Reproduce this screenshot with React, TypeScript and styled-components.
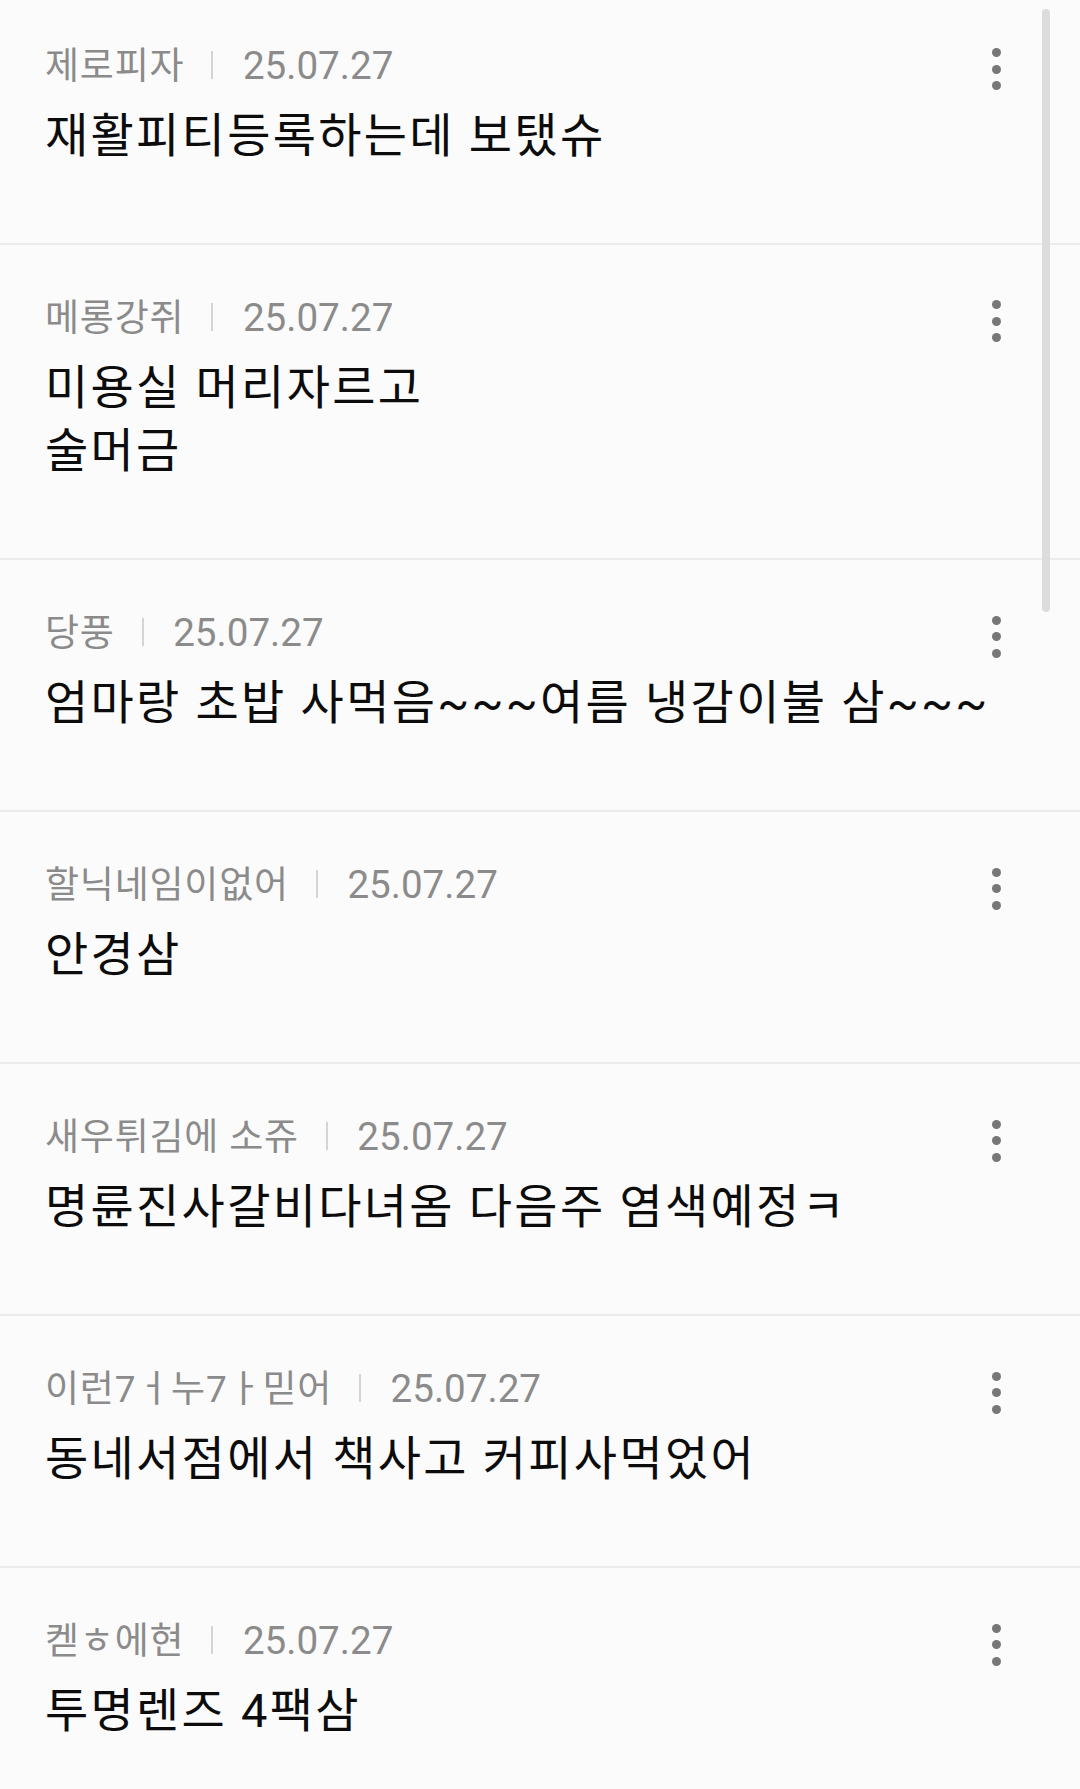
import React from "react";
import styled, { createGlobalStyle } from "styled-components";

const GlobalStyle = createGlobalStyle`
  html, body {
    margin: 0;
    padding: 0;
    background: #fbfbfb;
    overflow: hidden;
  }
  * { box-sizing: border-box; }
`;

const Page = styled.div`
  position: relative;
  width: 1080px;
  height: 1789px;
  overflow: hidden;
  background: #fbfbfb;
  font-family: Roboto, "Noto Sans CJK KR", sans-serif;
`;

const List = styled.ul`
  list-style: none;
  margin: 0;
  padding: 0;
`;

const Row = styled.li`
  display: flex;
  align-items: flex-start;
  padding: 46px 79.5px 75.5px 45px;
  border-bottom: 2px solid #ececec;
  &:first-child {
    padding-top: 38.5px;
  }
`;

const Content = styled.div`
  flex: 1;
  min-width: 0;
`;

const Meta = styled.div`
  font-family: Roboto, "Noto Sans CJK KR", sans-serif;
  font-size: 37px;
  line-height: 50px;
  height: 52px;
  padding-top: 2px;
  color: #8b8b8b;
  white-space: nowrap;
  overflow: hidden;
`;

const Nick = styled.span`
  letter-spacing: 0.8px;
`;

const Sep = styled.span`
  display: inline-block;
  width: 2px;
  height: 28px;
  margin: 0 29.5px 0 27px;
  background: #d4d4d4;
  vertical-align: 0;
`;

const DateText = styled.span`
  font-size: 38.6px;
  color: #8b8b8b;
`;

const Title = styled.div`
  margin-top: 13px;
  font-family: Roboto, "Noto Sans CJK KR", sans-serif;
  font-size: 47px;
  line-height: 63.5px;
  letter-spacing: 2.3px;
  color: #0c0c0c;
  white-space: pre;
`;

const More = styled.div`
  flex-shrink: 0;
  display: flex;
  flex-direction: column;
  gap: 7.6px;
  margin-top: 9.5px;
`;

const Dot = styled.span`
  display: block;
  width: 9px;
  height: 9px;
  border-radius: 50%;
  background: #777777;
`;

const ScrollThumb = styled.div`
  position: absolute;
  top: 9px;
  right: 30px;
  width: 8px;
  height: 603px;
  border-radius: 4px;
  background: #dcdcdc;
`;

type Post = { nick: string; date: string; title: string };

const posts: Post[] = [
  { nick: "제로피자", date: "25.07.27", title: "재활피티등록하는데 보탰슈" },
  { nick: "메롱강쥐", date: "25.07.27", title: "미용실 머리자르고\n술머금" },
  { nick: "당풍", date: "25.07.27", title: "엄마랑 초밥 사먹음~~~여름 냉감이불 삼~~~" },
  { nick: "할닉네임이없어", date: "25.07.27", title: "안경삼" },
  { nick: "새우튀김에 소쥬", date: "25.07.27", title: "명륜진사갈비다녀옴 다음주 염색예정ㅋ" },
  { nick: "이런7ㅓ누7ㅏ믿어", date: "25.07.27", title: "동네서점에서 책사고 커피사먹었어" },
  { nick: "켇ㅎ에현", date: "25.07.27", title: "투명렌즈 4팩삼" },
];

export default function App() {
  return (
    <Page>
      <GlobalStyle />
      <List>
        {posts.map((p, i) => (
          <Row key={i}>
            <Content>
              <Meta>
                <Nick>{p.nick}</Nick>
                <Sep />
                <DateText>{p.date}</DateText>
              </Meta>
              <Title>{p.title}</Title>
            </Content>
            <More aria-label="more">
              <Dot />
              <Dot />
              <Dot />
            </More>
          </Row>
        ))}
      </List>
      <ScrollThumb />
    </Page>
  );
}
